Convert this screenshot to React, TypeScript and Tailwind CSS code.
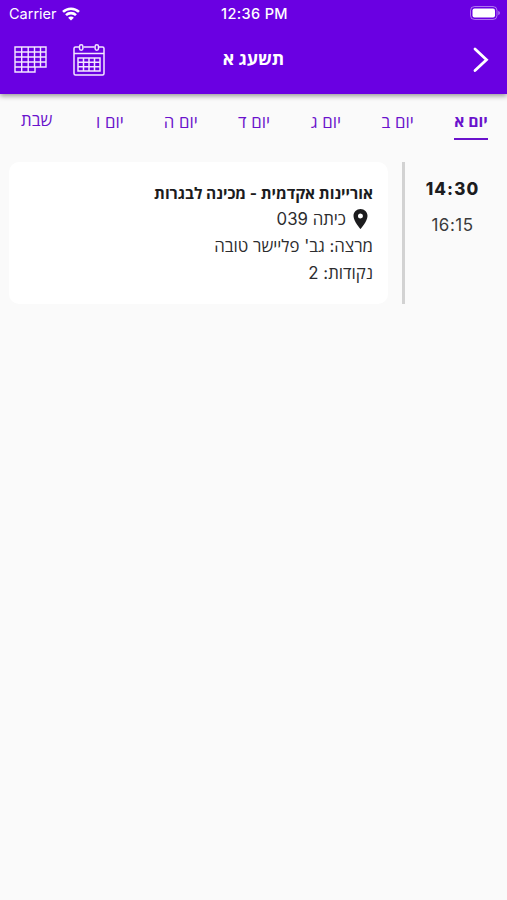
import React from 'react';

interface DayTab {
  id: string;
  label: string;
  className: string;
}

interface Lesson {
  id: string;
  title: string;
  room: string;
  lecturer: string;
  points: string;
  start: string;
  end: string;
}

const DAYS: DayTab[] = [
  { id: 'sun', label: 'יום א', className: 'w-[34px] justify-center border-b-2 border-[#6a12cc] text-[15.7px] font-bold' },
  { id: 'mon', label: 'יום ב', className: 'w-[33px] justify-center text-[16.8px]' },
  { id: 'tue', label: 'יום ג', className: 'w-[31px] justify-center text-[16.8px]' },
  { id: 'wed', label: 'יום ד', className: 'w-[33px] justify-center text-[16.8px]' },
  { id: 'thu', label: 'יום ה', className: 'w-[34px] justify-center text-[16.8px]' },
  { id: 'fri', label: 'יום ו', className: 'w-[28px] justify-center text-[16.8px]' },
  { id: 'sat', label: 'שבת', className: 'w-[35px] -mt-[2px] justify-end text-[16.8px]' },
];

const LESSONS: Lesson[] = [
  {
    id: 'lesson-1',
    title: 'אוריינות אקדמית - מכינה לבגרות',
    room: 'כיתה 039',
    lecturer: "מרצה: גב' פליישר טובה",
    points: 'נקודות: 2',
    start: '14:30',
    end: '16:15',
  },
];

function WifiIcon() {
  return (
    <svg className="h-[14px] w-[18px]" viewBox="0 0 18 14" fill="none" stroke="white" strokeWidth="2.6">
      <path d="M1 4.9C5.5.6 12.5.6 17 4.9" />
      <path d="M4 8.1c2.8-2.6 7.2-2.6 10 0" />
      <path d="M9 13.6 6.1 10.7c1.6-1.5 4.2-1.5 5.8 0z" fill="white" stroke="none" />
    </svg>
  );
}

function BatteryIcon() {
  return (
    <svg className="h-[14px] w-[31px]" viewBox="0 0 31 14" fill="none">
      <rect x=".5" y=".5" width="26.5" height="13" rx="4" stroke="white" strokeOpacity=".45" />
      <rect x="2.5" y="2.5" width="22.5" height="9" rx="2" fill="white" />
      <path d="M28.3 5v4c1-.4 1.5-1.1 1.5-2s-.5-1.6-1.5-2z" fill="white" fillOpacity=".5" />
    </svg>
  );
}

function TableIcon() {
  return (
    <svg className="h-[27px] w-[33px]" viewBox="0 0 33 27" fill="none" stroke="#f3e6ff" strokeWidth="1.4">
      <path d="M1 1h31v20H21v5H1zM7.7 1v25M14.2 1v25M20.5 1v20M26.5 1v20M1 6h31M1 11h31M1 16h31M1 21h20" />
    </svg>
  );
}

function CalendarIcon() {
  return (
    <svg className="h-[32px] w-[32px]" viewBox="0 0 32 32" fill="none" stroke="#f3e6ff" strokeWidth="1.5">
      <path d="M6 3H2.5Q1 3 1 4.5v25Q1 31 2.5 31h27q1.5 0 1.5-1.5v-25Q31 3 29.5 3H26M10.5 3h11M1 9.500h30" />
      <rect x="6.5" y=".8" width="3.4" height="5.5" rx="1.7" />
      <rect x="22.1" y=".8" width="3.4" height="5.5" rx="1.7" />
      <path d="M5 14h22v13H5zM10.5 14v13M16 14v13M21.5 14v13M5 18.3h22M5 22.7h22" />
    </svg>
  );
}

function StatusBar() {
  return (
    <div
      dir="ltr"
      className="grid h-[28px] grid-cols-[1fr_auto_1fr] items-center pl-[8px] pr-[6px] text-[14.5px] leading-none"
    >
      <div className="flex items-center gap-[5px] pl-px">
        <span>Carrier</span>
        <WifiIcon />
      </div>
      <span className="text-center font-medium tracking-[0.35px]">12:36 PM</span>
      <div className="flex h-[14px] -translate-y-[1px] justify-end">
        <BatteryIcon />
      </div>
    </div>
  );
}

function Header() {
  return (
    <header className="relative h-[94px] bg-[#6a00e2] text-white shadow-[0_2px_5px_rgba(0,0,0,0.4)]">
      <StatusBar />
      <div dir="ltr" className="grid h-[63px] grid-cols-[1fr_auto_1fr] items-center pl-[14px] pr-[18px]">
        <div className="flex items-center gap-[26px]">
          <button type="button" aria-label="טבלה"><TableIcon /></button>
          <button type="button" aria-label="לוח שנה"><CalendarIcon /></button>
        </div>
        <h1 dir="rtl" className="-mt-[2px] pl-[4px] text-center text-[17.8px] font-bold leading-none">תשעג א</h1>
        <button type="button" aria-label="חזרה" className="justify-self-end">
          <svg
            className="h-[26px] w-[17px]"
            viewBox="0 0 17 26"
            fill="none"
            stroke="white"
            strokeWidth="2.8"
            strokeLinecap="round"
          >
            <path d="m3 2 11.5 10.8L3 23.500" />
          </svg>
        </button>
      </div>
    </header>
  );
}

function DayTabs() {
  return (
    <nav className="flex h-[68px] justify-between pl-[21px] pr-[19px] pt-[17px] text-[#6a12cc]">
      {DAYS.map(day => (
        <button
          key={day.id}
          type="button"
          className={`flex h-[29px] whitespace-nowrap leading-[22px] ${day.className}`}
        >
          {day.label}
        </button>
      ))}
    </nav>
  );
}

function LessonRow({ lesson }: { lesson: Lesson }) {
  return (
    <article className="flex h-[142px] pl-[9px] text-[#1c1c1e]">
      <div className="flex w-[105px] shrink-0 flex-col items-center border-l-[3px] border-[#d2d2d2] pr-[7px] pt-[16px]">
        <span dir="ltr" className="text-[17px] font-extrabold leading-[22px] tracking-[1.1px]">{lesson.start}</span>
        <span dir="ltr" className="mt-[14px] text-[17px] leading-[22px] tracking-[0.5px] text-[#3a3a3c]">{lesson.end}</span>
      </div>
      <div className="mr-[14px] flex-1 rounded-[10px] bg-white pr-[15px] pt-[18px] text-[16.8px] leading-[27px] text-[#2c2c2e]">
        <h2 className="-mb-[1px] text-[15.5px] font-bold text-[#1c1c1e]">{lesson.title}</h2>
        <p className="flex items-center gap-[7px] pr-[5px]">
          <svg className="-mt-[2px] h-[20px] w-[15px]" viewBox="5 2 14 20" fill="#1c1c1e">
            <path d="M12 2C8.13 2 5 5.13 5 9c0 5.25 7 13 7 13s7-7.75 7-13c0-3.87-3.13-7-7-7zm0 9.5a2.5 2.5 0 1 1 0-5 2.5 2.5 0 0 1 0 5z" />
          </svg>
          {lesson.room}
        </p>
        <p>{lesson.lecturer}</p>
        <p>{lesson.points}</p>
      </div>
    </article>
  );
}

export default function App() {
  return (
    <div
      dir="rtl"
      className="h-screen w-full overflow-hidden bg-[#fafafa] font-[Inter,'Open_Sans','DejaVu_Sans',sans-serif]"
    >
      <Header />
      <DayTabs />
      <main>
        {LESSONS.map(lesson => (
          <LessonRow key={lesson.id} lesson={lesson} />
        ))}
      </main>
    </div>
  );
}
